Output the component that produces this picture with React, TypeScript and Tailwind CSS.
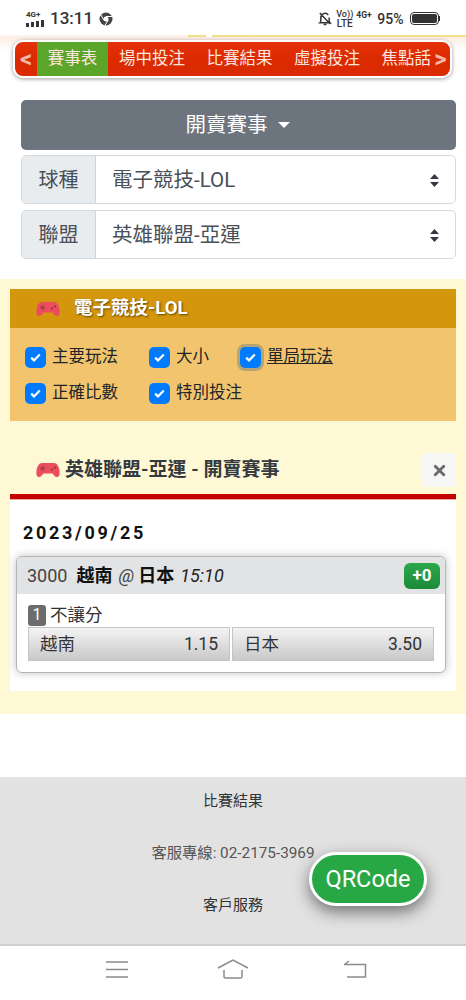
import React from 'react';
import { X } from 'lucide-react';

const font = "font-['Roboto','Noto_Sans_CJK_TC',sans-serif]";

const Gamepad = () => (
  <svg width="24" height="16" viewBox="0 0 24 16" className="shrink-0">
    <path d="M6 1h12c3 0 4.600 3 5.300 6.500.6 3.300.5 7-1.800 7.500-2 .4-3.500-1.400-5-3.500H7.500C6 13.600 4.500 15.400 2.500 15 .2 14.500.1 10.800.7 7.500 1.400 4 3 1 6 1z" fill="#ec4d5c" />
    <path d="M4 6.500h5M6.500 4v5" stroke="#a83843" strokeWidth="1.500" />
    <circle cx="16" cy="7.500" r="1.200" fill="#a83843" />
    <circle cx="19" cy="5.500" r="1.200" fill="#a83843" />
  </svg>
);

const Check = ({ focus }: { focus?: boolean }) => (
  <span
    className={`flex h-[21px] w-[21px] shrink-0 items-center justify-center rounded-[5px] bg-[#007bff] ${
      focus ? 'shadow-[0_0_0_3px_rgba(90,120,130,0.4)]' : ''
    }`}
  >
    <svg width="11" height="9" viewBox="0 0 11 9">
      <path d="M1.200 4.600 4 7.400 9.800 1.500" fill="none" stroke="#fff" strokeWidth="2.200" />
    </svg>
  </span>
);

const Option = ({ label, w, focus }: { label: string; w: string; focus?: boolean }) => (
  <label className={`flex items-center gap-[6px] ${w}`}>
    <Check focus={focus} />
    <span className={`text-[16.500px] text-[#212529] ${focus ? 'underline' : ''}`}>{label}</span>
  </label>
);

const SelectRow = ({ label, value }: { label: string; value: string }) => (
  <div className="flex h-[49px] overflow-hidden rounded-[5px] border border-[#d5dae0] bg-white">
    <div className="flex w-[74px] items-center justify-center border-r border-[#ced4da] bg-[#e9ecef] text-[20px] text-[#495057]">
      {label}
    </div>
    <div className="flex flex-1 items-center justify-between pl-[16px] pr-[15px] pt-[1px] text-[20.500px] text-[#495057]">
      <span>{value}</span>
      <svg width="11" height="15" viewBox="0 0 11 15">
        <path d="M5.500 1 10 6H1zM5.500 14 1 9h9z" fill="#343a40" />
      </svg>
    </div>
  </div>
);

const Odds = ({ team, price }: { team: string; price: string }) => (
  <div className="flex h-[34px] flex-1 items-center justify-between border border-[#c4c4c4] bg-gradient-to-b from-[#f4f4f4] to-[#c9c9c9] px-[11px] text-[17.500px] text-[#333]">
    <span>{team}</span>
    <span>{price}</span>
  </div>
);

export default function App() {
  return (
    <div className={`relative h-[1000px] w-[466px] overflow-hidden bg-white ${font}`}>
      {/* Status bar */}
      <div className="flex h-[35px] items-center justify-between px-[26px] pt-[2px] text-[#333]">
        <div className="flex items-center gap-[6px]">
          <div className="flex w-[18px] flex-col items-start">
            <span className="text-[8px] font-bold leading-[8px]">4G+</span>
            <div className="mt-[1px] flex items-end gap-[2px]">
              <span className="h-[4px] w-[3px] bg-[#333]" />
              <span className="h-[5px] w-[3px] bg-[#333]" />
              <span className="h-[6px] w-[3px] bg-[#333]" />
              <span className="h-[7px] w-[3px] bg-[#333]" />
            </div>
          </div>
          <span className="text-[17px] font-medium leading-none">13:11</span>
          <svg width="14" height="14" viewBox="0 0 14 14">
            <circle cx="7" cy="7" r="6.500" fill="#444" />
            <circle cx="7" cy="7" r="2.500" fill="#fff" />
            <path d="M7 4.500h6M4.800 8.200 2 3M9 8.500 6 13.400" stroke="#fff" strokeWidth="1" />
          </svg>
        </div>
        <div className="flex items-center">
          <svg width="14" height="15" viewBox="0 0 15 16" fill="none" stroke="#333" strokeWidth="1.600">
            <path d="M3 11.500V7a4.500 4.500 0 0 1 8-2.800M12 7v4.500l1 1H2l1-1M6 14.500h3M2 2l11 12" />
          </svg>
          <div className="ml-[5px] flex w-[15px] flex-col items-center text-[9px] font-medium leading-[9px]">
            <span>Vo))</span>
            <span className="text-[10px]">LTE</span>
          </div>
          <span className="mb-[6px] ml-[4px] w-[15px] text-[8.500px] font-bold leading-none">4G+</span>
          <span className="ml-[6px] text-[14px] font-medium leading-none">95%</span>
          <div className="ml-[6px] flex items-center">
            <div className="h-[13px] w-[29px] rounded-[4px] border border-[#333] p-[1px]">
              <div className="h-full w-full rounded-[2px] bg-[#333]" />
            </div>
            <div className="h-[5px] w-[1.500px] bg-[#333]" />
          </div>
        </div>
      </div>

      {/* Thin yellow line under the status bar */}
      <div className="flex h-[2px] bg-[#fdf3ea]">
        <div className="w-[188px]" />
        <div className="w-[18px] bg-[#f2e08a]" />
        <div className="w-[6px] bg-white" />
        <div className="flex-1 bg-[#f2e08a]" />
      </div>

      {/* Top nav */}
      <div className="flex h-[47px] bg-gradient-to-b from-[#fdeee4] to-white to-[30%] pl-[13px] pr-[14px] pt-[3px]">
        <div className="flex h-[38px] w-full items-stretch overflow-hidden rounded-[10px] border-2 border-white bg-gradient-to-b from-[#e4310a] via-[#dc2a00] to-[#d92a02] text-[16.500px] text-[#fbe6df] shadow-[0_1px_4px_rgba(0,0,0,0.4)]">
          <span className="flex w-[22px] items-center justify-center text-[24px] font-bold leading-none text-[#f5b8a8]">&lt;</span>
          <span className="flex w-[71px] items-center justify-center bg-[#5ba52a]">賽事表</span>
          <span className="flex w-[88px] items-center justify-center">場中投注</span>
          <span className="flex w-[87px] items-center justify-center">比賽結果</span>
          <span className="flex w-[88px] items-center justify-center">虛擬投注</span>
          <span className="flex w-[60px] items-center justify-end">焦點話</span>
          <span className="flex flex-1 items-center justify-center text-[24px] font-bold leading-none text-[#f5b8a8]">&gt;</span>
        </div>
      </div>

      {/* Filters */}
      <div className="flex flex-col pl-[21px] pr-[10px] pt-[16px]">
        <div className="flex h-[50px] items-center justify-center gap-[10px] rounded-[5px] bg-[#6c757d] pr-[2px] text-[20.500px] text-white">
          <span>開賣賽事</span>
          <span className="h-0 w-0 border-x-[6px] border-t-[6px] border-x-transparent border-t-white" />
        </div>
        <div className="mt-[5px] flex flex-col gap-[6px]">
          <SelectRow label="球種" value="電子競技-LOL" />
          <SelectRow label="聯盟" value="英雄聯盟-亞運" />
        </div>
      </div>

      {/* Cream section */}
      <div className="mt-[20px] h-[435px] bg-[#fff8d5] px-[10px] pt-[10px]">
        <div className="flex h-[39px] items-center gap-[14px] bg-[#d4960c] pl-[26px] pt-[1px] text-[18.500px] font-bold text-white [text-shadow:1px_1px_2px_rgba(0,0,0,0.55)]">
          <Gamepad />
          <span>電子競技-LOL</span>
        </div>
        <div className="flex h-[93px] flex-col gap-[15px] bg-[#f2c46d] pl-[15px] pt-[19px]">
          <div className="flex h-[21px] items-center">
            <Option label="主要玩法" w="w-[124px]" />
            <Option label="大小" w="w-[91px]" />
            <Option label="單局玩法" w="w-auto" focus />
          </div>
          <div className="flex h-[21px] items-center">
            <Option label="正確比數" w="w-[124px]" />
            <Option label="特別投注" w="w-auto" />
          </div>
        </div>

        <div className="mt-[27px] flex h-[44px] items-center justify-between">
          <div className="flex items-center gap-[5px] pl-[26px] text-[19px] font-bold text-[#343a40]">
            <Gamepad />
            <span>英雄聯盟-亞運 - 開賣賽事</span>
          </div>
          <div className="flex h-[34px] w-[34px] items-center justify-center rounded-[4px] bg-[#f6f6f4]">
            <X size={17} strokeWidth={4} className="text-[#6a6a6a]" />
          </div>
        </div>
        <div className="mt-[2px] h-[6px] border-t-[5px] border-[#c40000] bg-[#e8a8a0]" />

        <div className="h-[191px] bg-white px-[6px]">
          <div className="pl-[7px] pt-[22px] text-[18px] font-bold leading-[22px] tracking-[2.700px] text-[#111]">
            2023/09/25
          </div>
          <div className="mt-[12px] h-[117px] w-[430px] overflow-hidden rounded-[6px] border border-[#b5b5b5] bg-white shadow-[0_0_8px_rgba(0,0,0,0.25)]">
            <div className="flex h-[37px] items-center justify-between bg-[#e2e3e5] pl-[10px] pr-[5px] text-[18px]">
              <div className="flex items-center">
                <span className="text-[#444]">3000</span>
                <span className="ml-[9px] font-bold text-[#111]">越南</span>
                <span className="ml-[6px] italic text-[#444]">@</span>
                <span className="ml-[4px] font-bold text-[#111]">日本</span>
                <span className="ml-[6px] italic text-[#222]">15:10</span>
              </div>
              <span className="flex h-[26px] w-[36px] items-center justify-center rounded-[6px] bg-gradient-to-b from-[#2ca84a] to-[#1d8a3a] text-[17px] font-bold text-white">
                +0
              </span>
            </div>
            <div className="px-[11px] pt-[9px]">
              <div className="flex h-[24px] items-center gap-[4px] text-[17.500px] text-[#333]">
                <span className="flex h-[21px] w-[18px] items-center justify-center rounded-[3px] bg-[#6c6c6c] text-[16px] text-white">
                  1
                </span>
                <span>不讓分</span>
              </div>
              <div className="flex gap-[2px]">
                <Odds team="越南" price="1.15" />
                <Odds team="日本" price="3.50" />
              </div>
            </div>
          </div>
        </div>
      </div>

      {/* Footer */}
      <div className="mt-[63px] flex h-[169px] flex-col items-center border-b-[2px] border-[#cfcfcf] bg-[#e2e2e2] text-[15px] text-[#333]">
        <span className="mt-[14px] leading-[20px]">比賽結果</span>
        <span className="mt-[32px] text-[15.300px] leading-[20px] text-[#555]">客服專線: 02-2175-3969</span>
        <span className="mt-[32px] leading-[20px]">客戶服務</span>
      </div>

      {/* Android nav */}
      <div className="flex h-[54px] items-center justify-between pb-[8px] pl-[106px] pr-[99px]">
        <svg width="22" height="17" viewBox="0 0 22 17" stroke="#8a8a8a" strokeWidth="1.500">
          <path d="M0 1h22M0 8.500h22M0 16h22" />
        </svg>
        <svg width="32" height="20" viewBox="0 0 32 20" fill="none" stroke="#8a8a8a" strokeWidth="1.500" className="mr-[6px]">
          <path d="M1 9 16 1l15 8M7 11v6.500c0 1 .5 1.500 1.500 1.500h15c1 0 1.500-.5 1.500-1.500V11" />
        </svg>
        <svg width="24" height="18" viewBox="0 0 24 18" fill="none" stroke="#8a8a8a" strokeWidth="1.500">
          <path d="M1 4.500h21.500V17H4M6 1 1.500 4.500" />
        </svg>
      </div>

      {/* Floating QRCode button */}
      <div className="absolute left-[309px] top-[852px] flex h-[54px] w-[118px] items-center justify-center rounded-full border-[3px] border-white bg-[#28a745] pt-[1px] text-[23.500px] text-white shadow-[0_6px_16px_rgba(0,0,0,0.5)]">
        QRCode
      </div>
    </div>
  );
}
